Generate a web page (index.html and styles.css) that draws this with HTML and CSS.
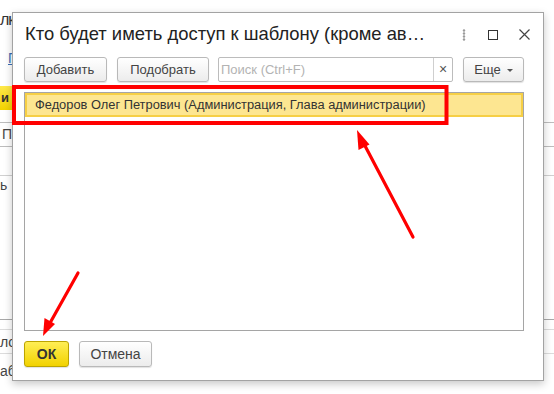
FILE: index.html
```html
<!DOCTYPE html>
<html lang="ru">
<head>
<meta charset="utf-8">
<title>Доступ к шаблону</title>
<link rel="stylesheet" href="styles.css">
</head>
<body>
<div class="page">
  <div class="bg">
    <div class="bg-r1"><span class="bg-title">лк</span></div>
    <div class="bg-r2"><span class="bg-link">П</span></div>
    <div class="bg-r3"><span class="bg-yellow">и</span></div>
    <div class="bg-line-r"></div>
    <div class="bg-r4"><span class="bg-cell">Пр</span></div>
    <div class="bg-r5"></div>
    <div class="bg-r6"><span class="bg-text">ь</span></div>
    <div class="bg-r7"></div>
    <div class="bg-r8"><span class="bg-text">ло</span></div>
    <div class="bg-r9"><span class="bg-text">аб</span></div>
  </div>

  <div class="dialog">
    <div class="dlg-head">
      <div class="dlg-title">Кто будет иметь доступ к шаблону (кроме ав…</div>
      <div class="dlg-icons">
        <svg class="ico-dots" width="4" height="12" viewBox="0 0 4 12"><circle cx="2" cy="1.5" r="1.2" fill="#9a9a9a"/><circle cx="2" cy="4.5" r="1.2" fill="#9a9a9a"/><circle cx="2" cy="7.5" r="1.2" fill="#9a9a9a"/><circle cx="2" cy="10.5" r="1.2" fill="#9a9a9a"/></svg>
        <svg class="ico-max" width="10" height="10" viewBox="0 0 10 10"><rect x="0.5" y="0.5" width="9" height="9" fill="none" stroke="#333" stroke-width="1"/></svg>
        <svg class="ico-close" width="11" height="11" viewBox="0 0 11 11"><path d="M0.5 0.5 L10.5 10.5 M10.5 0.5 L0.5 10.5" stroke="#444" stroke-width="1.2"/></svg>
      </div>
    </div>

    <div class="toolbar">
      <button class="btn btn-add">Добавить</button>
      <button class="btn btn-pick">Подобрать</button>
      <div class="search">
        <span class="search-ph">Поиск (Ctrl+F)</span>
        <span class="search-clear">×</span>
      </div>
      <button class="btn btn-more">Еще <span class="caret"></span></button>
    </div>

    <div class="list">
      <div class="row-sel">Федоров Олег Петрович (Администрация, Глава администрации)</div>
    </div>

    <div class="footer">
      <button class="btn btn-ok">ОК</button>
      <button class="btn btn-cancel">Отмена</button>
    </div>
  </div>

  <svg class="annot" width="554" height="394" viewBox="0 0 554 394">
    <rect x="14" y="87" width="432.5" height="36" fill="none" stroke="#ff0000" stroke-width="4"/>
    <line x1="413" y1="237" x2="363" y2="142" stroke="#ff0000" stroke-width="3.2" stroke-linecap="round"/>
    <polygon points="357,130 369.5,144.5 358.5,150" fill="#ff0000"/>
    <line x1="78" y1="273" x2="50" y2="323" stroke="#ff0000" stroke-width="3.2" stroke-linecap="round"/>
    <polygon points="43,336 44.5,318 55,324" fill="#ff0000"/>
  </svg>
</div>
</body>
</html>
```
FILE: styles.css
```css
* { box-sizing: border-box; }
html, body { margin: 0; padding: 0; }
body {
  width: 554px;
  height: 394px;
  overflow: hidden;
  background: #fff;
  font-family: "Liberation Sans", Arial, sans-serif;
  color: #333;
}
.page {
  position: relative;
  width: 554px;
  height: 394px;
  overflow: hidden;
}

/* background page (mostly hidden under the dialog) */
.bg {
  display: flex;
  flex-direction: column;
  width: 554px;
  height: 394px;
}
.bg-r1 { height: 40px; padding-top: 11px; }
.bg-title { font-size: 16px; color: #333; letter-spacing: -1px; }
.bg-r2 { height: 46px; padding-top: 9px; }
.bg-link { font-size: 14px; color: #3a6db5; text-decoration: underline; margin-left: 8px; }
.bg-r3 { height: 24px; }
.bg-yellow {
  display: block;
  width: 12px;
  height: 24px;
  background: linear-gradient(#ffe94a, #f3d200);
  font-size: 13px;
  font-weight: bold;
  line-height: 24px;
  color: #333;
  padding-left: 1px;
}
.bg-line-r { height: 13px; border-bottom: 1px solid #bdbdbd; }
.bg-r4 { height: 24px; border-bottom: 1px solid #bdbdbd; }
.bg-cell {
  display: inline-block;
  height: 23px;
  padding-left: 2px;
  font-size: 14px;
  line-height: 23px;
  color: #444;
  border-right: 1px solid #c8c8c8;
}
.bg-r5 { height: 29px; border-bottom: 1px solid #d0d0d0; }
.bg-r6 { height: 144px; border-bottom: 1px solid #a8a8a8; }
.bg-r6 .bg-text { display: block; margin-top: 0; }
.bg-text { font-size: 14px; color: #444; line-height: 18px; }
.bg-r7 { height: 10px; border-bottom: 1px solid #dcdcdc; }
.bg-r8 { height: 24px; border-bottom: 1px solid #dcdcdc; padding-top: 3px; }
.bg-r9 { padding-top: 8px; }

/* dialog window */
.dialog {
  position: absolute;
  left: 12px;
  top: 12px;
  width: 532px;
  height: 369px;
  background: #fff;
  border: 1px solid #a3a3a3;
  box-shadow: 0 3px 8px rgba(0, 0, 0, 0.22);
  display: flex;
  flex-direction: column;
  padding: 0 19px 13px 11px;
}
.dlg-head {
  height: 44px;
  display: flex;
  align-items: center;
  justify-content: space-between;
  padding-left: 1px;
  margin-right: -6px;
}
.dlg-title {
  font-size: 18.4px;
  color: #222;
  white-space: nowrap;
  margin-top: -2px;
}
.dlg-icons {
  display: flex;
  align-items: center;
  margin-top: -1px;
}
.ico-dots { margin-right: 22px; }
.ico-max { margin-right: 21px; }

.toolbar {
  height: 25px;
  display: flex;
  margin-bottom: 10px;
}
.btn {
  height: 25px;
  border: 1px solid #b9b9b9;
  border-radius: 3px;
  background: linear-gradient(#ffffff, #ececec);
  box-shadow: 0 1px 1px rgba(0, 0, 0, 0.12);
  font-family: "Liberation Sans", Arial, sans-serif;
  font-size: 13px;
  color: #444;
  padding: 0;
  display: flex;
  align-items: center;
  justify-content: center;
}
.btn-add { width: 83px; margin-right: 10px; }
.btn-pick { width: 92px; margin-right: 9px; }
.search {
  width: 235px;
  height: 25px;
  display: flex;
  border: 1px solid #bcbcbc;
  border-radius: 2px;
  margin-right: 10px;
}
.search-ph {
  flex: 1;
  font-size: 13px;
  color: #b3b3b3;
  line-height: 23px;
  padding-left: 2px;
}
.search-clear {
  width: 19px;
  border-left: 1px solid #cfcfcf;
  text-align: center;
  font-size: 14px;
  line-height: 22px;
  color: #555;
}
.btn-more { width: 61px; }
.caret {
  display: inline-block;
  width: 0;
  height: 0;
  margin-left: 6px;
  margin-top: 2px;
  border-left: 3px solid transparent;
  border-right: 3px solid transparent;
  border-top: 3px solid #555;
}

.list {
  flex: 1;
  border: 1px solid #a5a5a5;
  padding: 0;
}
.row-sel {
  height: 24px;
  background: #fde691;
  border: 2px solid #f6cf45;
  font-size: 12.85px;
  color: #333;
  line-height: 20px;
  padding-left: 8px;
}

.footer {
  height: 26px;
  margin-top: 10px;
  display: flex;
}
.btn-ok {
  width: 45px;
  height: 26px;
  margin-right: 10px;
  background: linear-gradient(#ffee55, #f2d200);
  border-color: #bca400;
  font-weight: bold;
  font-size: 14px;
  color: #333;
}
.btn-cancel { width: 73px; height: 26px; font-size: 14px; }

.annot {
  position: absolute;
  left: 0;
  top: 0;
  pointer-events: none;
}
```
